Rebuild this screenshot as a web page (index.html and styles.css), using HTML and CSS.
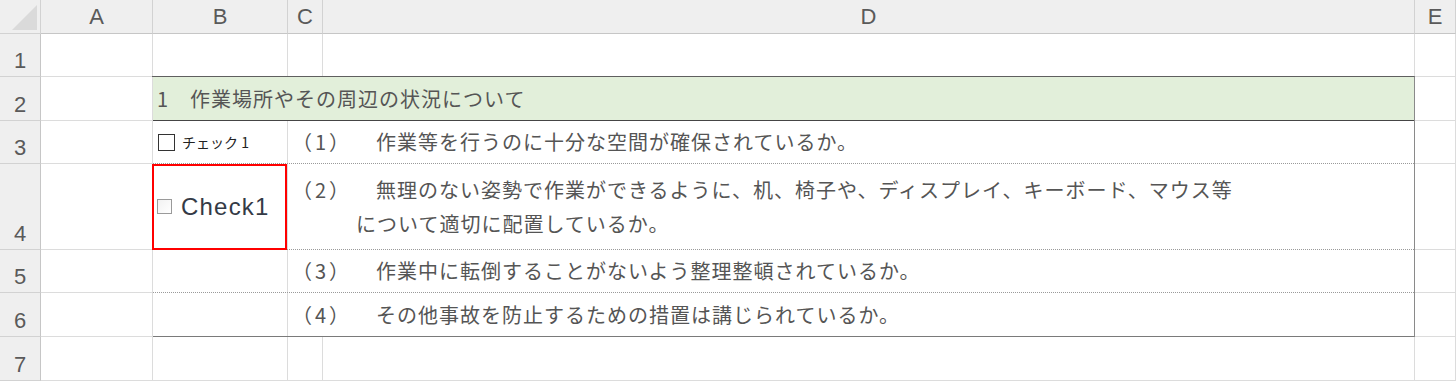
FILE: index.html
```html
<!DOCTYPE html>
<html lang="ja">
<head>
    <meta charset="UTF-8">
    <title>チェックリスト</title>
    <link rel="stylesheet" href="styles.css">
</head>
<body>
    <div class="sheet">
        <!-- 列見出し -->
        <div class="corner">
            <svg width="41" height="34" viewBox="0 0 41 34"><polygon points="37,5 37,30 12,30" fill="#dadada"/></svg>
        </div>
        <div class="col-h">A</div>
        <div class="col-h">B</div>
        <div class="col-h">C</div>
        <div class="col-h">D</div>
        <div class="col-h">E</div>

        <div class="row-h">1</div>
        <div class="cell"></div>
        <div class="cell"></div>
        <div class="cell"></div>
        <div class="cell"></div>
        <div class="cell"></div>

        <!-- 表本体 (B2:D6) -->
        <div class="form">
            <div class="title">1　作業場所やその周辺の状況について</div>
            <div class="item">
                <div class="check">
                    <span class="box"></span>
                    <span class="check-label">チェック 1</span>
                </div>
                <div class="q">
                    <div class="q-line">
                        <span class="no">（1）</span>
                        <span class="txt">作業等を行うのに十分な空間が確保されているか。</span>
                    </div>
                </div>
            </div>
            <div class="item">
                <div class="check check-big">
                    <span class="box box-light"></span>
                    <span class="check-label-big">Check1</span>
                </div>
                <div class="q">
                    <div class="q-line">
                        <span class="no">（2）</span>
                        <span class="txt">無理のない姿勢で作業ができるように、机、椅子や、ディスプレイ、キーボード、マウス等<br>について適切に配置しているか。</span>
                    </div>
                </div>
            </div>
            <div class="item">
                <div class="check"></div>
                <div class="q">
                    <div class="q-line">
                        <span class="no">（3）</span>
                        <span class="txt">作業中に転倒することがないよう整理整頓されているか。</span>
                    </div>
                </div>
            </div>
            <div class="item">
                <div class="check"></div>
                <div class="q">
                    <div class="q-line">
                        <span class="no">（4）</span>
                        <span class="txt">その他事故を防止するための措置は講じられているか。</span>
                    </div>
                </div>
            </div>
        </div>

        <div class="row-h">2</div>
        <div class="cell"></div>
        <div class="cell"></div>
        <div class="row-h">3</div>
        <div class="cell"></div>
        <div class="cell"></div>
        <div class="row-h">4</div>
        <div class="cell"></div>
        <div class="cell"></div>
        <div class="row-h">5</div>
        <div class="cell"></div>
        <div class="cell"></div>
        <div class="row-h">6</div>
        <div class="cell"></div>
        <div class="cell"></div>

        <div class="row-h">7</div>
        <div class="cell"></div>
        <div class="cell"></div>
        <div class="cell"></div>
        <div class="cell"></div>
        <div class="cell"></div>
    </div>
</body>
</html>
```

FILE: styles.css
```css
body {
    margin: 0;
    background: #fff;
    font-family: "Noto Sans CJK JP", sans-serif;
    color: #555;
}
.sheet {
    display: grid;
    grid-template-columns: 41px 112px 135px 35px 1092px 1fr;
    grid-template-rows: 34px 43px 44px 43px 86px 43px 44px 44px;
    width: 1456px;
    height: 381px;
    overflow: hidden;
}
.cell {
    box-sizing: border-box;
    border-right: 1px solid #dcdcdc;
    border-bottom: 1px solid #dcdcdc;
}
.corner, .col-h, .row-h {
    box-sizing: border-box;
    background: #efefef;
    border-right: 1px solid #d2d2d2;
    border-bottom: 1px solid #d2d2d2;
    font-family: "Liberation Sans", Arial, sans-serif;
    font-size: 22px;
    color: #5a5a5a;
    line-height: 1;
}
.corner svg {
    display: block;
}
.col-h {
    display: flex;
    justify-content: center;
    align-items: center;
    border-bottom-color: #c6c6c6;
}
.row-h {
    display: flex;
    justify-content: center;
    align-items: flex-end;
    padding-bottom: 4px;
    border-right-color: #c6c6c6;
}

/* 表本体 */
.form {
    grid-column: 3 / 6;
    grid-row: 3 / 8;
    margin: -1px 0 0 -1px;
    border: 1px solid #5f5f5f;
    border-right-color: #8a8a8a;
    border-bottom-color: #7a7a7a;
    display: grid;
    grid-template-rows: 44px 43px 86px 43px 43px;
    font-size: 20px;
    letter-spacing: 1px;
    background: #fff;
}
.title {
    box-sizing: border-box;
    background: #e2efda;
    border-bottom: 1px solid #454545;
    padding-left: 4px;
    display: flex;
    align-items: center;
}
.item {
    box-sizing: border-box;
    display: grid;
    grid-template-columns: 135px 1fr;
    border-bottom: 1px dotted #9a9a9a;
}
.item:last-child {
    border-bottom: none;
}
.check {
    box-sizing: border-box;
    border-right: 1px solid #dcdcdc;
    display: flex;
    align-items: center;
    padding-left: 5px;
    letter-spacing: 0;
}
.check-big {
    position: relative;
    padding-left: 4px;
}
.check-big::after {
    content: "";
    position: absolute;
    top: 0;
    left: -1px;
    right: 0;
    bottom: -1px;
    border: 2px solid #ff0000;
}
.box {
    box-sizing: border-box;
    width: 17px;
    height: 17px;
    border: 1px solid #333;
    margin-right: 7px;
    background: #fff;
}
.box-light {
    width: 15px;
    height: 15px;
    border-color: #9a9a9a;
    background: linear-gradient(135deg, #f2f2f2, #fff);
    margin-right: 9px;
}
.check-label {
    font-size: 14px;
    color: #222;
}
.check-label-big {
    font-family: "Liberation Sans", Arial, sans-serif;
    font-size: 24px;
    letter-spacing: 1.2px;
    color: #343a46;
}
.q {
    display: flex;
    align-items: center;
    padding-left: 4px;
    line-height: 34px;
}
.q-line {
    display: flex;
}
.no {
    flex: none;
    width: 64px;
    letter-spacing: 3px;
}
.txt {
    text-indent: 20px;
}
```
